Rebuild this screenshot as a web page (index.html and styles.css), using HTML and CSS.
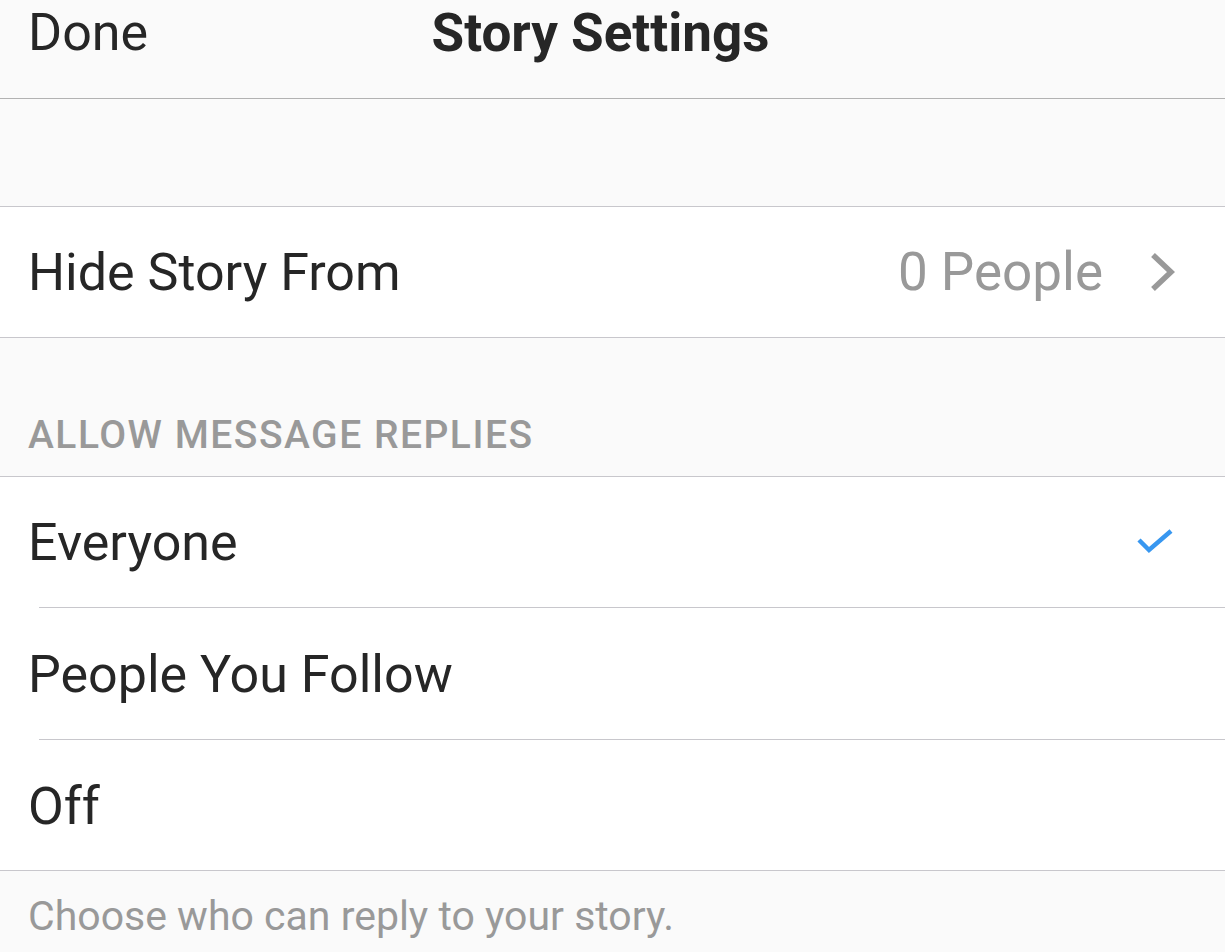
FILE: index.html
```html
<!DOCTYPE html>
<html>
<head>
<meta charset="utf-8">
<link rel="stylesheet" href="styles.css">
</head>
<body>
<div class="screen">
  <header class="navbar">
    <span class="done">Done</span>
    <span class="title">Story Settings</span>
  </header>
  <div class="spacer"></div>
  <div class="group">
    <div class="row">
      <span class="label">Hide Story From</span>
      <span class="value">0 People</span>
      <svg class="chevron" width="28" height="40" viewBox="0 0 28 40"><path d="M4 3 L22 20 L4 37" fill="none" stroke="#999" stroke-width="5.5"/></svg>
    </div>
  </div>
  <div class="section-head">ALLOW MESSAGE REPLIES</div>
  <div class="group">
    <div class="row option first">
      <span class="label">Everyone</span>
      <svg class="check" width="38" height="28" viewBox="0 0 38 28"><path d="M2 12 L12 22 L34 3" fill="none" stroke="#3897f0" stroke-width="4.5"/></svg>
    </div>
    <div class="row option second">
      <span class="label">People You Follow</span>
    </div>
    <div class="row option third">
      <span class="label">Off</span>
    </div>
  </div>
  <div class="footer-note">Choose who can reply to your story.</div>
</div>
</body>
</html>
```

FILE: styles.css
```css
html, body {
  margin: 0;
  padding: 0;
  background: #fafafa;
}
.screen {
  width: 1225px;
  height: 952px;
  overflow: hidden;
  font-family: Roboto, "Liberation Sans", sans-serif;
  color: #262626;
  background: #fafafa;
}
.navbar {
  height: 98px;
  border-bottom: 1px solid #b2b2b2;
  display: flex;
  align-items: flex-start;
  padding: 0 28px;
  position: relative;
}
.done {
  font-size: 52px;
  line-height: 66px;
}
.title {
  position: absolute;
  left: 0;
  right: 24px;
  text-align: center;
  font-size: 53px;
  font-weight: 700;
  line-height: 66px;
}
.spacer {
  height: 107px;
  border-bottom: 1px solid #c8c7cc;
}
.group {
  background: #fff;
  border-bottom: 1px solid #c8c7cc;
}
.row {
  height: 130px;
  display: flex;
  align-items: center;
  padding: 0 48px 0 28px;
}
.label {
  font-size: 52px;
  flex: 1;
}
.value {
  font-size: 53px;
  color: #999;
  margin-right: 46px;
}
.chevron {
  display: block;
}
.option {
  position: relative;
  box-sizing: border-box;
}
.option.first {
  height: 130px;
}
.option.second {
  height: 132px;
  padding-top: 2px;
}
.option.third {
  height: 131px;
  padding-top: 4px;
}
.option.second::before,
.option.third::before {
  content: "";
  position: absolute;
  left: 39px;
  right: 0;
  top: 0;
  border-top: 1px solid #c8c7cc;
}
.check {
  display: block;
  margin-right: 2px;
}
.section-head {
  height: 139px;
  box-sizing: border-box;
  padding: 74px 28px 0;
  font-size: 39px;
  font-weight: 500;
  letter-spacing: 1.5px;
  color: #999;
  border-bottom: 1px solid #c8c7cc;
  line-height: 46px;
}
.footer-note {
  padding: 22px 28px 0;
  font-size: 41px;
  color: #999;
  line-height: 46px;
}
```
